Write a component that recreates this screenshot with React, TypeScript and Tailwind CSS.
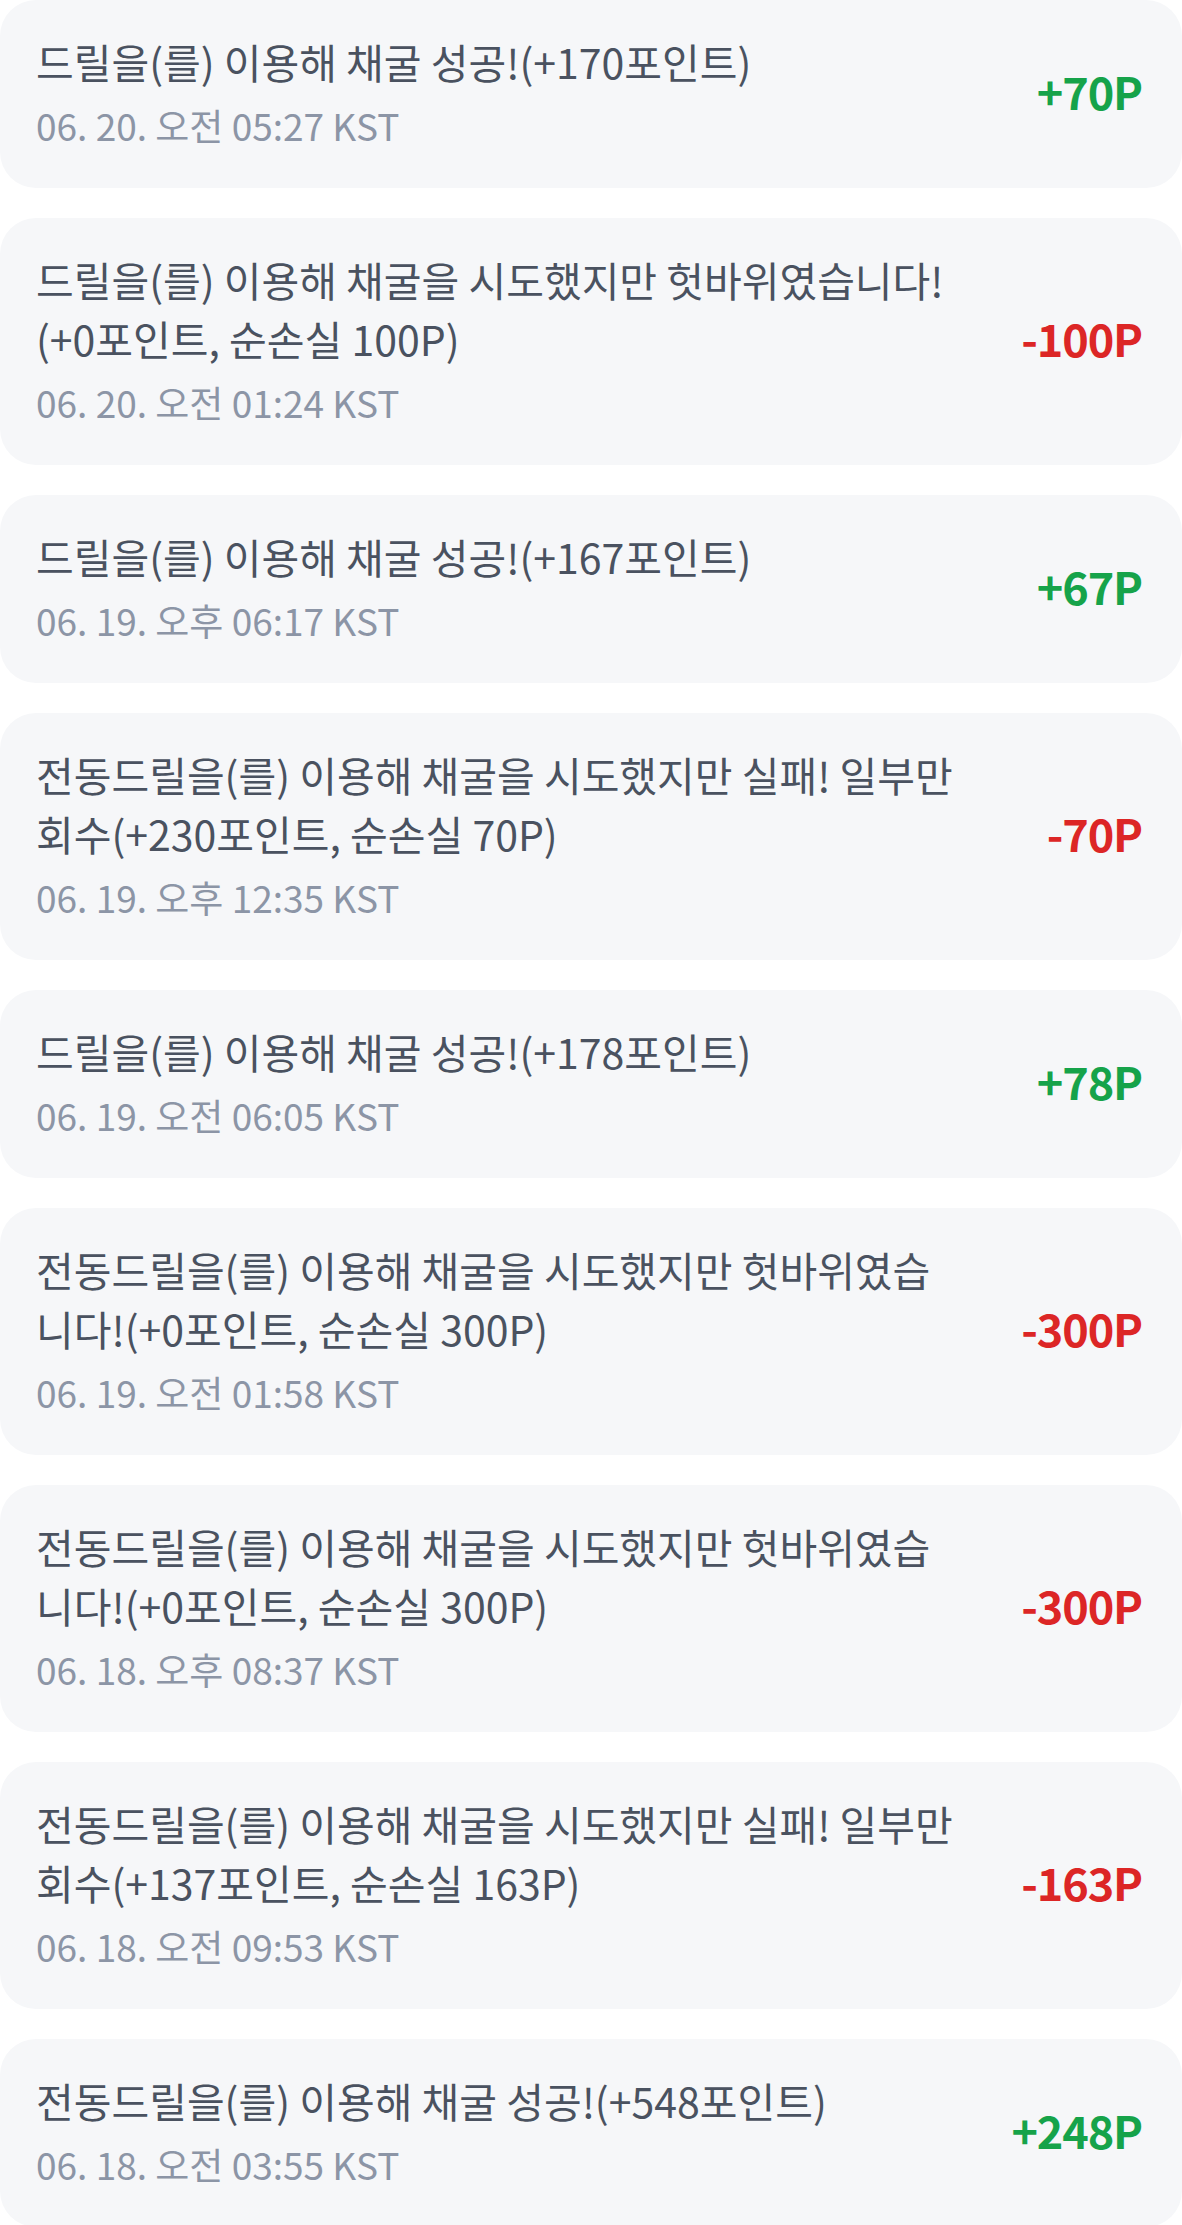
import React from "react";

type Entry = {
  lines: string[];
  date: string;
  amount: string;
  positive: boolean;
};

const entries: Entry[] = [
  {
    lines: ["드릴을(를) 이용해 채굴 성공!(+170포인트)"],
    date: "06. 20. 오전 05:27 KST",
    amount: "+70P",
    positive: true,
  },
  {
    lines: ["드릴을(를) 이용해 채굴을 시도했지만 헛바위였습니다!", "(+0포인트, 순손실 100P)"],
    date: "06. 20. 오전 01:24 KST",
    amount: "-100P",
    positive: false,
  },
  {
    lines: ["드릴을(를) 이용해 채굴 성공!(+167포인트)"],
    date: "06. 19. 오후 06:17 KST",
    amount: "+67P",
    positive: true,
  },
  {
    lines: ["전동드릴을(를) 이용해 채굴을 시도했지만 실패! 일부만", "회수(+230포인트, 순손실 70P)"],
    date: "06. 19. 오후 12:35 KST",
    amount: "-70P",
    positive: false,
  },
  {
    lines: ["드릴을(를) 이용해 채굴 성공!(+178포인트)"],
    date: "06. 19. 오전 06:05 KST",
    amount: "+78P",
    positive: true,
  },
  {
    lines: ["전동드릴을(를) 이용해 채굴을 시도했지만 헛바위였습", "니다!(+0포인트, 순손실 300P)"],
    date: "06. 19. 오전 01:58 KST",
    amount: "-300P",
    positive: false,
  },
  {
    lines: ["전동드릴을(를) 이용해 채굴을 시도했지만 헛바위였습", "니다!(+0포인트, 순손실 300P)"],
    date: "06. 18. 오후 08:37 KST",
    amount: "-300P",
    positive: false,
  },
  {
    lines: ["전동드릴을(를) 이용해 채굴을 시도했지만 실패! 일부만", "회수(+137포인트, 순손실 163P)"],
    date: "06. 18. 오전 09:53 KST",
    amount: "-163P",
    positive: false,
  },
  {
    lines: ["전동드릴을(를) 이용해 채굴 성공!(+548포인트)"],
    date: "06. 18. 오전 03:55 KST",
    amount: "+248P",
    positive: true,
  },
];

function Row({ e }: { e: Entry }) {
  return (
    <div className="flex items-center justify-between rounded-[36px] bg-[#f6f7f9] pl-[36px] pr-[40px] pt-[32px] pb-[39px]">
      <div className="flex flex-col gap-[10px] min-w-0">
        <div className="text-[41px] leading-[59px] text-[#4a5260]">
          {e.lines.map((l, i) => (
            <span key={i} className="block whitespace-nowrap">
              {l}
            </span>
          ))}
        </div>
        <div className="text-[37px] leading-[48px] text-[#8c95a6] whitespace-nowrap">{e.date}</div>
      </div>
      <div
        className={
          e.positive
            ? "shrink-0 text-[45px] leading-[56px] font-semibold tracking-tight text-[#16a34a]"
            : "shrink-0 text-[45px] leading-[56px] font-semibold tracking-tight text-[#dc2626]"
        }
      >
        {e.amount}
      </div>
    </div>
  );
}

export default function App() {
  return (
    <div className="min-h-screen w-[1182px] bg-white [font-family:'Noto_Sans_CJK_KR','Noto_Sans_KR',sans-serif]">
      <div className="flex flex-col gap-[30px]">
        {entries.map((e, i) => (
          <Row key={i} e={e} />
        ))}
      </div>
    </div>
  );
}
